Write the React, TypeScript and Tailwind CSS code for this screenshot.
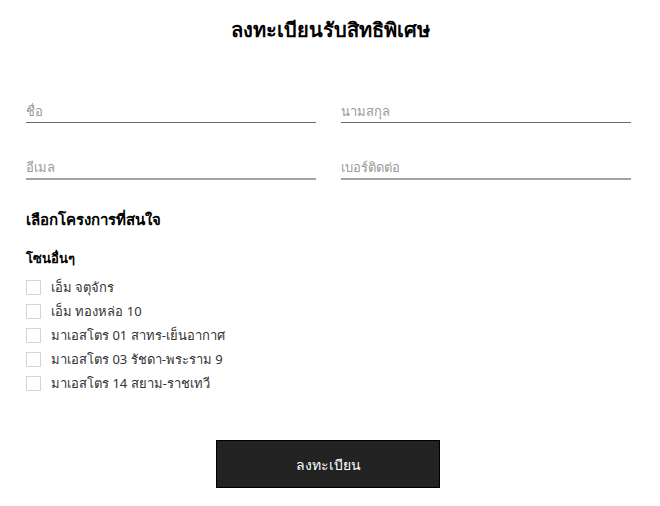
import React from "react";

const projects = [
  "เอ็ม จตุจักร",
  "เอ็ม ทองหล่อ 10",
  "มาเอสโตร 01 สาทร-เย็นอากาศ",
  "มาเอสโตร 03 รัชดา-พระราม 9",
  "มาเอสโตร 14 สยาม-ราชเทวี",
];

function Field({ label, thick }: { label: string; thick?: boolean }) {
  return (
    <div
      className={
        "flex h-[34px] items-end pb-[1px] text-[13px] text-[#9a9a9a] " +
        (thick ? "border-b-2 border-[#a3a3a3]" : "border-b border-[#6b6b6b]")
      }
    >
      {label}
    </div>
  );
}

export default function App() {
  return (
    <div className="min-h-[506px] w-[660px] bg-white font-['Noto_Sans',sans-serif] text-[#222]">
      <h1 className="pt-[16px] text-center text-[20px] font-bold leading-[28px] text-black">
        ลงทะเบียนรับสิทธิพิเศษ
      </h1>

      <div className="mt-[45px] grid grid-cols-2 gap-x-[25px] gap-y-[23px] px-[26px] pr-[29px]">
        <Field label="ชื่อ" />
        <Field label="นามสกุล" />
        <Field label="อีเมล" thick />
        <Field label="เบอร์ติดต่อ" thick />
      </div>

      <div className="px-[26px]">
        <h2 className="mt-[28px] text-[15px] font-bold leading-[22px] text-black">
          เลือกโครงการที่สนใจ
        </h2>
        <h3 className="mt-[18px] text-[13px] font-bold leading-[20px] text-black">
          โซนอื่นๆ
        </h3>
        <ul className="mt-[12px] flex flex-col gap-[9px]">
          {projects.map((p) => (
            <li key={p} className="flex h-[15px] items-center gap-[10px]">
              <span className="h-[15px] w-[15px] border border-[#d6d6d6] bg-white" />
              <span className="text-[13px] leading-[15px] text-[#333]">{p}</span>
            </li>
          ))}
        </ul>
      </div>

      <div className="mt-[49px] flex justify-center pr-[4px]">
        <button className="h-[48px] w-[224px] border border-black bg-[#222] text-[14px] text-white">
          ลงทะเบียน
        </button>
      </div>
    </div>
  );
}
